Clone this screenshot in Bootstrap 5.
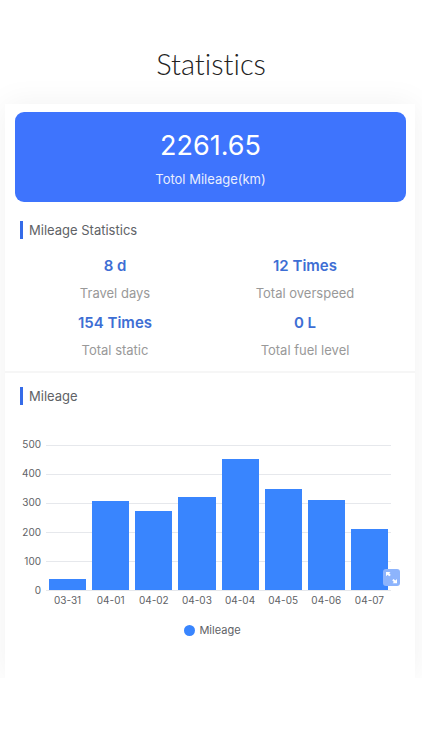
<!DOCTYPE html>
<html lang="en">
<head>
<meta charset="utf-8">
<meta name="viewport" content="width=device-width, initial-scale=1">
<title>Statistics</title>
<link href="https://cdn.jsdelivr.net/npm/bootstrap@5.3.0/dist/css/bootstrap.min.css" rel="stylesheet">
<style>
body { font-family: Inter, "Liberation Sans", sans-serif; font-size: 13px; line-height: 20px; color: #606266; background: #fff; }
.page-title { font-family: Lato, sans-serif; font-weight: 300; font-size: 29px; line-height: 36px; font-variant-ligatures: none; color: #222; padding: 46px 0 22px; }
.panel { margin: 0 7px 0 5px; background: #fff; box-shadow: 0 0 30px rgba(0,0,0,.06); padding-bottom: 38px; }
.total { margin: 0 9px 0 10px; padding: 18px 0 13px; border-radius: 9px; background: #3e74fd; color: #fff; }
.total-value { font-size: 27px; line-height: 32px; }
.total-label { margin-top: 7px; color: #e8eefe; }
.summary { padding-top: 19px; }
.heading { font-size: 13px; line-height: 18px; font-weight: 400; border-left: 3px solid #356be8; padding-left: 6px; margin: 0 15px; }
.stat-value { font-size: 15px; line-height: 20px; font-weight: 600; color: #3d6ed4; }
.stat-label { color: #999; margin: 7px 0 10px; }
.stats { padding: 17px 15px 1px; }
.chart-section { border-top: 2px solid #f6f6f6; padding-top: 14px; }
.chart { margin: 32px 24px 0 0; font-size: 10px; line-height: 14px; }
.y-axis { width: 36px; height: 160px; text-align: right; }
.plot { display: grid; margin-left: 5px; }
.lines, .bars { grid-area: 1 / 1; height: 146px; margin-top: 8px; }
.lines i { border-top: 1px solid #e6e8ec; }
.bars { padding-bottom: 1px; }
.bar-cell { flex: 1; padding: 0 3px; }
.bar-fill { background: #3985fe; }
.x-axis { margin: 2px 0 0 5px; }
.x-axis span { flex: 1; }
.expand { position: absolute; right: -9px; bottom: 5px; width: 17px; height: 17px; border-radius: 3px; background: #8db4fc; }
.legend-dot { width: 11px; height: 11px; background: #3985fe; }
.chart-legend { margin-top: 13px; padding-left: 5px; font-size: 11px; }
</style>
<script src="https://cdn.jsdelivr.net/npm/bootstrap@5.3.0/dist/js/bootstrap.bundle.min.js"></script>
</head>
<body>
<h1 class="page-title text-center m-0">Statistics</h1>
<main class="panel">
  <div class="pt-2">
    <section class="total text-center">
      <div class="total-value">2261.65</div>
      <div class="total-label">Totol Mileage(km)</div>
    </section>
  </div>
  <section class="summary">
    <h2 class="heading">Mileage Statistics</h2>
    <div class="stats row g-0 text-center">
      <div class="col-6"><div class="stat-value">8 d</div><div class="stat-label">Travel days</div></div>
      <div class="col-6"><div class="stat-value">12 Times</div><div class="stat-label">Total overspeed</div></div>
      <div class="col-6"><div class="stat-value">154 Times</div><div class="stat-label">Total static</div></div>
      <div class="col-6"><div class="stat-value">0 L</div><div class="stat-label">Total fuel level</div></div>
    </div>
  </section>
  <section class="chart-section">
    <h2 class="heading">Mileage</h2>
    <div class="chart d-flex">
      <div class="y-axis d-flex flex-column justify-content-between">
        <span>500</span><span>400</span><span>300</span><span>200</span><span>100</span><span>0</span>
      </div>
      <div class="flex-fill">
        <div class="plot position-relative">
          <div class="lines d-flex flex-column justify-content-between"><i></i><i></i><i></i><i></i><i></i><i></i></div>
          <div class="bars d-flex align-items-end">
            <div class="bar-cell h-100 d-flex align-items-end"><div class="bar-fill w-100" style="height:7.6%"></div></div>
            <div class="bar-cell h-100 d-flex align-items-end"><div class="bar-fill w-100" style="height:61.6%"></div></div>
            <div class="bar-cell h-100 d-flex align-items-end"><div class="bar-fill w-100" style="height:54.4%"></div></div>
            <div class="bar-cell h-100 d-flex align-items-end"><div class="bar-fill w-100" style="height:64.4%"></div></div>
            <div class="bar-cell h-100 d-flex align-items-end"><div class="bar-fill w-100" style="height:90.4%"></div></div>
            <div class="bar-cell h-100 d-flex align-items-end"><div class="bar-fill w-100" style="height:69.4%"></div></div>
            <div class="bar-cell h-100 d-flex align-items-end"><div class="bar-fill w-100" style="height:62.2%"></div></div>
            <div class="bar-cell h-100 d-flex align-items-end"><div class="bar-fill w-100" style="height:41.8%"></div></div>
          </div>
          <button type="button" class="expand border-0 p-0 d-flex" aria-label="Expand chart">
            <svg width="17" height="17" viewBox="0 0 17 17" fill="#fff"><path d="M3 3h4.5L6.2 4.3 7.8 5.9 6.2 7.2 4.6 5.7 3 7.3zM14 14.3H9.5l1.4-1.4-1.7-1.6 1.4-1.4 1.7 1.6L14 10z"/></svg>
          </button>
        </div>
        <div class="x-axis d-flex text-center">
          <span>03-31</span><span>04-01</span><span>04-02</span><span>04-03</span><span>04-04</span><span>04-05</span><span>04-06</span><span>04-07</span>
        </div>
      </div>
    </div>
    <div class="chart-legend d-flex align-items-center justify-content-center gap-1"><span class="legend-dot rounded-circle"></span><span>Mileage</span></div>
  </section>
</main>
</body>
</html>
